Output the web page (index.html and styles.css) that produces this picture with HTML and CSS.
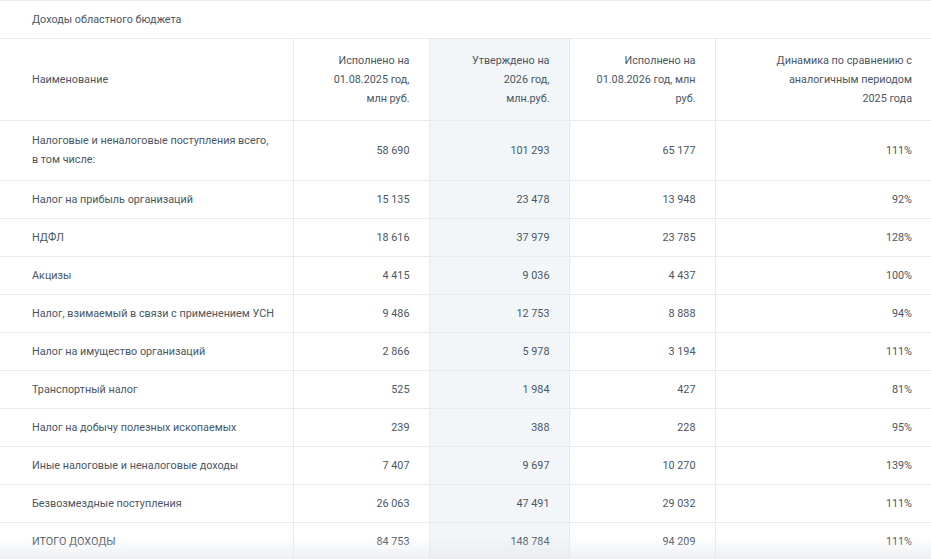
FILE: index.html
```html
<!DOCTYPE html>
<html lang="ru">
<head>
<meta charset="utf-8">
<title>Доходы областного бюджета</title>
<link rel="stylesheet" href="styles.css">
</head>
<body>
<div class="panel">
  <div class="title">Доходы областного бюджета</div>
  <table class="budget">
    <colgroup>
      <col class="c-name">
      <col class="c-a">
      <col class="c-b">
      <col class="c-c">
      <col class="c-d">
    </colgroup>
    <thead>
      <tr>
        <th class="name">Наименование</th>
        <th>Исполнено на<br>01.08.2025 год,<br>млн руб.</th>
        <th class="shade">Утверждено на<br>2026 год,<br>млн.руб.</th>
        <th>Исполнено на<br>01.08.2026 год, млн<br>руб.</th>
        <th>Динамика по сравнению с<br>аналогичным периодом<br>2025 года</th>
      </tr>
    </thead>
    <tbody>
      <tr class="tall">
        <td class="name">Налоговые и неналоговые поступления всего,<br>в том числе:</td>
        <td>58 690</td><td class="shade">101 293</td><td>65 177</td><td>111%</td>
      </tr>
      <tr>
        <td class="name">Налог на прибыль организаций</td>
        <td>15 135</td><td class="shade">23 478</td><td>13 948</td><td>92%</td>
      </tr>
      <tr>
        <td class="name">НДФЛ</td>
        <td>18 616</td><td class="shade">37 979</td><td>23 785</td><td>128%</td>
      </tr>
      <tr>
        <td class="name">Акцизы</td>
        <td>4 415</td><td class="shade">9 036</td><td>4 437</td><td>100%</td>
      </tr>
      <tr>
        <td class="name">Налог, взимаемый в связи с применением УСН</td>
        <td>9 486</td><td class="shade">12 753</td><td>8 888</td><td>94%</td>
      </tr>
      <tr>
        <td class="name">Налог на имущество организаций</td>
        <td>2 866</td><td class="shade">5 978</td><td>3 194</td><td>111%</td>
      </tr>
      <tr>
        <td class="name">Транспортный налог</td>
        <td>525</td><td class="shade">1 984</td><td>427</td><td>81%</td>
      </tr>
      <tr>
        <td class="name">Налог на добычу полезных ископаемых</td>
        <td>239</td><td class="shade">388</td><td>228</td><td>95%</td>
      </tr>
      <tr>
        <td class="name">Иные налоговые и неналоговые доходы</td>
        <td>7 407</td><td class="shade">9 697</td><td>10 270</td><td>139%</td>
      </tr>
      <tr>
        <td class="name">Безвозмездные поступления</td>
        <td>26 063</td><td class="shade">47 491</td><td>29 032</td><td>111%</td>
      </tr>
      <tr>
        <td class="name">ИТОГО ДОХОДЫ</td>
        <td>84 753</td><td class="shade">148 784</td><td>94 209</td><td>111%</td>
      </tr>
    </tbody>
  </table>
</div>
<div class="fade"></div>
</body>
</html>
```

FILE: styles.css
```css
html, body {
  margin: 0;
  padding: 0;
  background: #ffffff;
}

body {
  font-family: Roboto, "Liberation Sans", sans-serif;
  font-size: 10.8px;
  color: #4b5661;
  overflow: hidden;
  height: 559px;
}

.panel {
  border-top: 1px solid #e8ebee;
}

.title {
  height: 37px;
  line-height: 37px;
  padding-left: 32px;
  border-bottom: 1px solid #e8ebee;
}

.budget {
  width: 931px;
  border-collapse: collapse;
  table-layout: fixed;
}

.c-name { width: 293px; }
.c-a { width: 136px; }
.c-b { width: 140px; }
.c-c { width: 146px; }
.c-d { width: 216px; }

.budget th,
.budget td {
  font-weight: normal;
  text-align: right;
  vertical-align: middle;
  line-height: 19px;
  padding: 9px 19px 9px 8px;
  border-bottom: 1px solid #e8ebee;
  border-left: 1px solid #e8ebee;
  white-space: nowrap;
}

.budget th {
  padding-top: 12px;
  padding-bottom: 12px;
}

.budget th.name,
.budget td.name {
  text-align: left;
  padding-left: 32px;
  border-left: none;
}

.budget tr.tall td {
  padding-top: 10px;
  padding-bottom: 11px;
}

.budget .shade {
  background: #f3f6f9;
}

.fade {
  position: fixed;
  left: 0;
  right: 0;
  bottom: 0;
  height: 22px;
  background: linear-gradient(to bottom, rgba(230, 233, 236, 0), rgba(230, 233, 236, 0.7));
  pointer-events: none;
}
```
